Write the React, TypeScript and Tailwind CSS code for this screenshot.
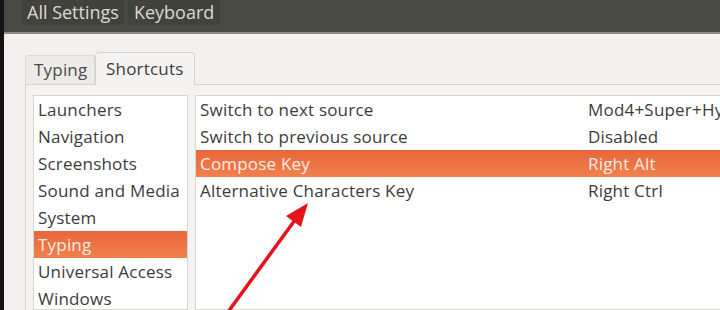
import React from 'react';

const categories = [
  'Launchers',
  'Navigation',
  'Screenshots',
  'Sound and Media',
  'System',
  'Typing',
  'Universal Access',
  'Windows',
];

const shortcuts = [
  { name: 'Switch to next source', key: 'Mod4+Super+Hyper' },
  { name: 'Switch to previous source', key: 'Disabled' },
  { name: 'Compose Key', key: 'Right Alt', active: true },
  { name: 'Alternative Characters Key', key: 'Right Ctrl' },
];

export default function App() {
  return (
    <div className="w-[720px] h-[310px] overflow-hidden flex bg-[#f2f1ef] font-['Open_Sans',sans-serif] text-[17px] tracking-[0.2px] text-[#3c3c3c] relative">
      {/* left window edge */}
      <div className="w-[4px] bg-[#141414] shrink-0" />

      <div className="flex-1 flex flex-col min-w-0">
        {/* header bar */}
        <div className="h-[32px] bg-[#4a4a44] flex items-start pl-[18px] gap-[4px] shrink-0">
          <div className="h-[25px] px-[5px] flex items-center bg-[#42423d] rounded-b-[3px] text-[#dcd8cf] text-[18px] tracking-normal">
            All Settings
          </div>
          <div className="h-[25px] px-[6px] flex items-center bg-[#42423d] rounded-b-[3px] text-[#dcd8cf] text-[18px] tracking-normal">
            Keyboard
          </div>
        </div>
        <div className="h-[2px] bg-[#8c8b85] shrink-0" />

        {/* tabs */}
        <div className="flex items-end pl-[21px] pt-[18px] shrink-0">
          <div className="h-[29px] w-[70px] pl-[8px] flex items-center border border-b-0 border-[#dcdad5] bg-[#ecebe8] rounded-t-[3px] text-[#4a4a4a]">
            Typing
          </div>
          <div className="h-[33px] w-[100px] pl-[10px] flex items-center border border-b-0 border-[#d6d4cf] bg-[#f4f3f1] rounded-t-[4px] text-[#3c3c3c] -mb-px relative">
            Shortcuts
          </div>
        </div>

        {/* notebook page */}
        <div className="flex-1 ml-[21px] border-t border-l border-[#d6d4cf] bg-[#f4f3f1] pl-[7px] pt-[10px] flex gap-[7px] min-h-0">
          <div className="w-[155px] bg-white border border-[#d8d6d1] flex flex-col">
            {categories.map((c) => (
              <div
                key={c}
                className={`h-[27px] shrink-0 flex items-center pl-[4px] whitespace-nowrap ${
                  c === 'Typing' ? 'bg-gradient-to-b from-[#e8663a] to-[#f2804f] text-[#fbeee6]' : ''
                }`}
              >
                {c}
              </div>
            ))}
          </div>
          <div className="flex-1 bg-white border border-r-0 border-[#d8d6d1] flex flex-col min-w-0">
            {shortcuts.map((s) => (
              <div
                key={s.name}
                className={`h-[27px] shrink-0 flex items-center whitespace-nowrap ${
                  s.active ? 'bg-gradient-to-b from-[#e8663a] to-[#f2804f] text-[#fbeee6]' : ''
                }`}
              >
                <span className="w-[392px] pl-[4px] shrink-0">{s.name}</span>
                <span>{s.key}</span>
              </div>
            ))}
          </div>
        </div>
      </div>

      {/* annotation arrow */}
      <svg className="absolute left-0 top-0 pointer-events-none" width="720" height="310" viewBox="0 0 720 310">
        <line x1="228" y1="312" x2="295" y2="220" stroke="#e4141b" strokeWidth="3.5" strokeLinecap="round" />
        <polygon points="308,203 286,216 301,227" fill="#e4141b" />
      </svg>
    </div>
  );
}
